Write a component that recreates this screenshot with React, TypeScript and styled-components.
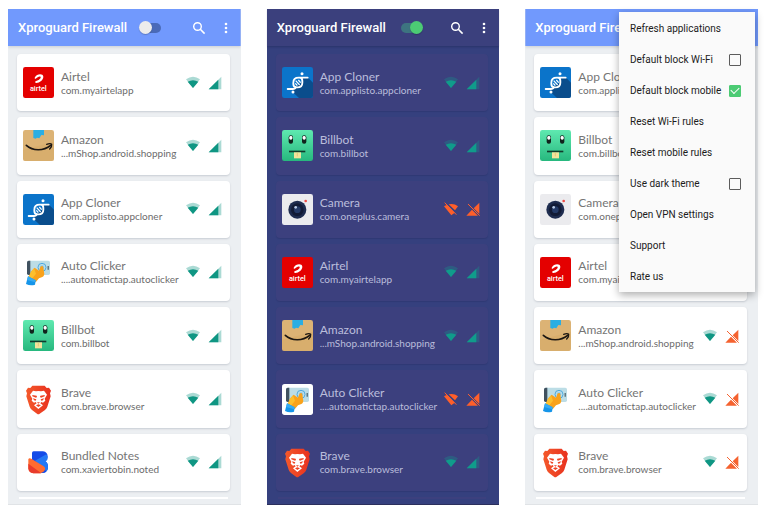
import React, { useState } from "react";
import styled, { createGlobalStyle, css } from "styled-components";

const GlobalStyle = createGlobalStyle`
  *, *::before, *::after { box-sizing: border-box; }
  body { margin: 0; background: #ffffff; font-family: Roboto, "Liberation Sans", sans-serif; }
  button { font: inherit; color: inherit; background: none; border: 0; padding: 0; cursor: pointer; }
  h1, h2, p, ul { margin: 0; padding: 0; font-weight: inherit; }
  ul { list-style: none; }
`;

interface Palette {
  page: string;
  header: string;
  card: string;
  name: string;
  pack: string;
  cardShadow: string;
  headerShadow: string;
  edge: string;
  allowed: string;
  blocked: string;
  faded: number;
}

const light: Palette = {
  page: "#eceff2",
  header: "#7199fd",
  card: "#ffffff",
  name: "#757575",
  pack: "#6c6c6c",
  cardShadow: "0 1px 2px rgba(60, 70, 90, 0.2)",
  headerShadow: "0 1px 3px rgba(60, 70, 90, 0.2)",
  edge: "#e0e3e6",
  allowed: "#0f9683",
  blocked: "#f5622f",
  faded: 0.35,
};

const dark: Palette = {
  page: "#35407e",
  header: "#3b407d",
  card: "#3c407e",
  name: "#babddb",
  pack: "#babddb",
  cardShadow: "0 1px 1px rgba(20, 25, 80, 0.18)",
  headerShadow: "0 1px 2px rgba(20, 25, 70, 0.35)",
  edge: "#2b2f5c",
  allowed: "#109c8b",
  blocked: "#ff5f2a",
  faded: 0.3,
};

const Gallery = styled.main`
  display: grid;
  grid-template-columns: repeat(3, 1fr);
  gap: 26px;
  min-height: 100vh;
  padding: 9px 17px 14px 8px;
`;

const Phone = styled.section<{ $p: Palette }>`
  position: relative;
  display: flex;
  flex-direction: column;
  min-width: 0;
  background: ${({ $p }) => $p.page};
  box-shadow: inset 0 -1px 0 ${({ $p }) => $p.edge};
`;

const Header = styled.header<{ $p: Palette }>`
  display: flex;
  align-items: center;
  height: 37px;
  padding: 0 10px;
  color: #ffffff;
  background: ${({ $p }) => $p.header};
  box-shadow: ${({ $p }) => $p.headerShadow};
  clip-path: inset(0 0 -4px 0);
`;

const Title = styled.h1`
  flex: 1;
  font-size: 13px;
  line-height: 16px;
  font-weight: 500;
  white-space: nowrap;
`;

const Switch = styled.input`
  appearance: none;
  display: grid;
  align-items: center;
  flex: none;
  width: 26px;
  height: 14px;
  margin: 0 26px 0 0;
  cursor: pointer;

  &::before,
  &::after {
    content: "";
    grid-area: 1 / 1;
  }
  &::before {
    width: 18px;
    height: 10px;
    margin-left: 4px;
    border-radius: 5px;
    background: #4a6ab8;
  }
  &::after {
    width: 13px;
    height: 13px;
    border-radius: 50%;
    background: #ececec;
    box-shadow: 0 1px 1px rgba(0, 0, 0, 0.2);
  }
  &:checked::before {
    background: #3d7480;
  }
  &:checked::after {
    justify-self: end;
    background: #4ccb74;
  }
`;

const HeaderButton = styled.button`
  display: grid;
  place-items: center;
  flex: none;
  width: 16px;
  height: 20px;

  & + & {
    width: 10px;
    margin-left: 14px;
  }
  & svg {
    display: block;
  }
`;

const CardList = styled.ul`
  display: flex;
  flex: 1;
  flex-direction: column;
  gap: 6px;
  padding: 8px 11px 6px 9px;
`;

const Card = styled.li<{ $p: Palette }>`
  display: flex;
  flex: 1;
  align-items: center;
  padding: 0 8px 0 6px;
  border-radius: 4px;
  background: ${({ $p }) => $p.card};
  box-shadow: ${({ $p }) => $p.cardShadow};
`;

const NextCard = styled.li<{ $p: Palette }>`
  height: 2px;
  margin: 0 2px;
  background: ${({ $p }) => $p.card};
`;

const AppIcon = styled.svg`
  display: block;
  flex: none;
  width: 31px;
  height: 31px;
`;

const Labels = styled.div`
  flex: 1;
  min-width: 0;
  margin-left: 7px;
  font-family: Lato, "Liberation Sans", sans-serif;
  white-space: nowrap;
`;

const AppName = styled.h2<{ $p: Palette }>`
  font-size: 12px;
  line-height: 14px;
  color: ${({ $p }) => $p.name};
`;

const PackageName = styled.p<{ $p: Palette }>`
  font-size: 10px;
  line-height: 12px;
  color: ${({ $p }) => $p.pack};
`;

const RuleButton = styled.button`
  display: block;
  flex: none;
  margin-left: 8px;

  & svg {
    display: block;
    width: 14px;
    height: 14px;
  }
`;

const Menu = styled.ul`
  position: absolute;
  top: 3px;
  right: 3px;
  width: 136px;
  padding-top: 1px;
  background: #fafafa;
  box-shadow: 0 3px 8px rgba(0, 0, 0, 0.32);
`;

const itemBox = css`
  display: flex;
  align-items: center;
  justify-content: space-between;
  width: 100%;
  height: 31px;
  padding: 0 14px 0 11px;
  font-size: 10px;
  line-height: 14px;
  color: #1c1c1c;
  white-space: nowrap;
`;

const MenuAction = styled.button`
  && {
    ${itemBox}
  }
`;

const MenuOption = styled.label`
  ${itemBox}
`;

const Tick = styled.input`
  appearance: none;
  display: grid;
  place-items: center;
  width: 12px;
  height: 12px;
  margin: 0;
  border: 1px solid #5c5c5c;
  border-radius: 1px;

  &:checked {
    border-color: #4ccb74;
    background: #4ccb74;
  }
  &:checked::before {
    content: "";
    width: 8px;
    height: 5px;
    margin-bottom: 2px;
    border: solid #ffffff;
    border-width: 0 0 1px 1px;
    transform: rotate(-45deg);
  }
`;

type AppKey = "airtel" | "amazon" | "cloner" | "clicker" | "billbot" | "brave" | "notes" | "camera";

const apps: Record<AppKey, { name: string; pack: string }> = {
  airtel: { name: "Airtel", pack: "com.myairtelapp" },
  amazon: { name: "Amazon", pack: "...mShop.android.shopping" },
  cloner: { name: "App Cloner", pack: "com.applisto.appcloner" },
  clicker: { name: "Auto Clicker", pack: "....automatictap.autoclicker" },
  billbot: { name: "Billbot", pack: "com.billbot" },
  brave: { name: "Brave", pack: "com.brave.browser" },
  notes: { name: "Bundled Notes", pack: "com.xaviertobin.noted" },
  camera: { name: "Camera", pack: "com.oneplus.camera" },
};

const artwork: Record<AppKey, React.ReactNode> = {
  airtel: (
    <>
      <rect width="93" height="93" rx="7" fill="#e40000" />
      <path
        d="M36 31C40 21 60 18 61 29C61 39 50 47 40 48C36 48 35 44 39 42C47 40 54 35 53 30C50 26 43 31 38 35C35 36 34 34 36 31Z"
        fill="#fff"
      />
      <text x="46" y="71" textAnchor="middle" fontFamily="Roboto, sans-serif" fontWeight="500" fontSize="22" fill="#fff">
        airtel
      </text>
    </>
  ),
  amazon: (
    <>
      <rect width="93" height="93" rx="7" fill="#dcb375" />
      <path d="M0 60L93 35V86Q93 93 86 93H7Q0 93 0 86Z" fill="#d6aa68" opacity=".6" />
      <path d="M31 0H63V16L55 15L49 25L42 23L38 26L31 24Z" fill="#2baee3" />
      <path d="M10 46C30 64 62 63 83 46" fill="none" stroke="#1b1612" strokeWidth="5" strokeLinecap="round" />
      <path d="M71 43C77 41 83 40 86 43C87 48 84 53 80 57" fill="none" stroke="#1b1612" strokeWidth="4" strokeLinecap="round" />
    </>
  ),
  cloner: (
    <>
      <rect width="93" height="93" rx="7" fill="#0b74ca" />
      <path d="M61 30L76 30L93 47V86Q93 93 86 93H51L32 75L37 60L60 46Z" fill="#0a4d8c" />
      <path
        d="M77 32H50Q34 32 34 47V51Q34 61 43 61H46Q61 61 61 47V41Q61 32 52 32M17 66H32Q40 66 42 60"
        fill="#0a4d8c"
        fillOpacity="0"
        stroke="#fff"
        strokeWidth="5.5"
        strokeLinecap="round"
      />
      <path d="M41 41L53 54M40 49L46 56M49 39L56 47" stroke="#fff" strokeWidth="3.5" />
      <circle cx="60" cy="20" r="4.5" fill="#fff" />
      <circle cx="33" cy="75" r="4.5" fill="#fff" />
    </>
  ),
  clicker: (
    <>
      <rect width="93" height="93" rx="8" fill="#fff" />
      <rect x="12" y="11" width="69" height="43" rx="5" fill="#bcdde6" />
      <path d="M17 11H22V54H17Q12 54 12 49V16Q12 11 17 11Z" fill="#40515f" />
      <path d="M74 27H77V38H74Z" fill="#34444f" />
      <circle cx="57" cy="31" r="12" fill="none" stroke="#369fe0" strokeWidth="2.5" />
      <circle cx="57" cy="31" r="6" fill="#81c6ee" />
      <path d="M57 27Q52 27 51 33L48 41L35 32L25 43L17 60L38 76L48 64L58 60Q66 56 63 46L61 31Q60 27 57 27Z" fill="#f9a21b" />
      <path d="M33 34L24 44L17 60L26 67L39 50Z" fill="#fdbf2d" />
      <path d="M15 58L38 70L36 83Q22 88 9 81Z" fill="#1595e9" />
      <path d="M15 58L38 70L37 76L12 69Z" fill="#36abf3" />
    </>
  ),
  billbot: (
    <>
      <rect width="93" height="93" rx="7" fill="url(#billbotFace)" />
      <rect x="20" y="16" width="13" height="25" rx="6" fill="#11231d" />
      <rect x="60" y="16" width="13" height="25" rx="6" fill="#11231d" />
      <rect x="22" y="18" width="9" height="11" rx="4" fill="#fff" />
      <rect x="62" y="18" width="9" height="11" rx="4" fill="#fff" />
      <rect x="21" y="62" width="49" height="5" fill="#123b2c" />
      <rect x="36" y="67" width="21" height="18" fill="#f4e39b" />
      <path d="M46 67V79" stroke="#d9c06e" strokeWidth="2" />
    </>
  ),
  brave: (
    <>
      <path
        d="M28 5H65L71 12L78 11L84 20L81 28L83 37L73 68Q71 74 66 78L50 89Q46 92 42 89L27 78Q22 74 20 68L10 37L12 28L9 20L15 11L22 12Z"
        fill="url(#braveFur)"
      />
      <path
        d="M30 20L39 22Q46 20 54 22L63 20L72 32L65 44L67 50L60 56L55 54L52 58L60 64L46 75L33 64L41 58L38 54L33 56L26 50L28 44L21 32Z"
        fill="#fff"
      />
      <path
        d="M28 33L41 35L42 39L39 41L28 37ZM65 33L52 35L51 39L54 41L65 37ZM30 43L40 46L38 50L33 49ZM63 43L53 46L55 50L60 49ZM42 55H51L46 59ZM39 64L46 61L54 64L46 69Z"
        fill="#ee4323"
      />
    </>
  ),
  notes: (
    <>
      <path d="M27 18Q27 13 32 13H60Q74 15 74 29Q74 38 67 43Q76 48 75 62Q73 77 60 78H40L27 60Z" fill="#134be8" />
      <path d="M36 41L70 22Q76 30 73 38Q71 42 67 43Q76 49 75 62Q74 69 70 73Z" fill="#2379f5" />
      <path d="M16 37Q18 31 25 35L62 58Q69 63 65 70Q61 78 52 79H31Q17 77 16 64Z" fill="#ff6b30" />
      <path d="M16 50L55 79H31Q17 77 16 64Z" fill="#e83b2c" />
    </>
  ),
  camera: (
    <>
      <rect width="93" height="93" rx="7" fill="#ebebee" />
      <circle cx="46" cy="47" r="27" fill="#1e2c4f" />
      <circle cx="46" cy="47" r="19" fill="#121b36" />
      <circle cx="46" cy="47" r="10" fill="#243a67" />
      <circle cx="41" cy="40" r="4" fill="#b9cbe6" />
      <circle cx="71" cy="21" r="4" fill="#ee4b45" />
    </>
  ),
};

const Gradients = () => (
  <svg width="0" height="0" aria-hidden="true" display="block">
    <defs>
      <linearGradient id="billbotFace" x1="0" y1="0" x2="0" y2="1">
        <stop offset="0" stopColor="#5fe9b0" />
        <stop offset="1" stopColor="#27b87e" />
      </linearGradient>
      <linearGradient id="braveFur" x1="0" y1="0" x2="1" y2="0">
        <stop offset="0" stopColor="#f4592b" />
        <stop offset="1" stopColor="#e8311f" />
      </linearGradient>
    </defs>
  </svg>
);

const WifiIcon = ({ p, blocked }: { p: Palette; blocked: boolean }) =>
  blocked ? (
    <svg viewBox="0 0 42 42" aria-hidden="true">
      <path d="M14 7Q30 3 42 13L33 25ZM9 9L32 32L22 40L0 13Q4 10 9 9Z" fill={p.blocked} />
      <path d="M2 2L37 38" stroke={p.blocked} strokeWidth="3" />
    </svg>
  ) : (
    <svg viewBox="0 0 42 42" aria-hidden="true">
      <path d="M0 10Q21 -5 42 10L21 36Z" fill={p.allowed} opacity={p.faded} />
      <path d="M5 17Q21 8 37 17L21 36Z" fill={p.allowed} />
    </svg>
  );

const MobileIcon = ({ p, blocked }: { p: Palette; blocked: boolean }) =>
  blocked ? (
    <svg viewBox="0 0 42 42" aria-hidden="true">
      <path d="M40 2V36L23 19ZM18 23L36 41H1Z" fill={p.blocked} />
      <path d="M6 6L41 41" stroke={p.blocked} strokeWidth="3" />
    </svg>
  ) : (
    <svg viewBox="0 0 42 42" aria-hidden="true">
      <path d="M40 2V40H2Z" fill={p.allowed} opacity={p.faded} />
      <path d="M31 11V40H2Z" fill={p.allowed} />
    </svg>
  );

interface Row {
  app: AppKey;
  wifiBlocked?: boolean;
  mobileBlocked?: boolean;
}

function AppRow({ row, p }: { row: Row; p: Palette }) {
  const [wifi, setWifi] = useState(!!row.wifiBlocked);
  const [mobile, setMobile] = useState(!!row.mobileBlocked);
  const { name, pack } = apps[row.app];
  return (
    <Card $p={p}>
      <AppIcon viewBox="0 0 93 93" aria-hidden="true">
        {artwork[row.app]}
      </AppIcon>
      <Labels>
        <AppName $p={p}>{name}</AppName>
        <PackageName $p={p}>{pack}</PackageName>
      </Labels>
      <RuleButton aria-label={`Wi-Fi rule for ${name}`} aria-pressed={wifi} onClick={() => setWifi(!wifi)}>
        <WifiIcon p={p} blocked={wifi} />
      </RuleButton>
      <RuleButton aria-label={`Mobile rule for ${name}`} aria-pressed={mobile} onClick={() => setMobile(!mobile)}>
        <MobileIcon p={p} blocked={mobile} />
      </RuleButton>
    </Card>
  );
}

interface PhoneProps {
  p: Palette;
  rows: Row[];
  enabled?: boolean;
  children?: React.ReactNode;
}

function FirewallPhone({ p, rows, enabled = false, children }: PhoneProps) {
  return (
    <Phone $p={p}>
      <Header $p={p}>
        <Title>Xproguard Firewall</Title>
        <Switch type="checkbox" role="switch" aria-label="Enable firewall" defaultChecked={enabled} />
        <HeaderButton aria-label="Search">
          <svg width="14" height="14" viewBox="0 0 14 14" fill="none" stroke="currentColor" strokeWidth="1.4">
            <circle cx="5.5" cy="5.5" r="3.8" />
            <path d="M8.3 8.3L12.6 12.6" strokeWidth="1.6" />
          </svg>
        </HeaderButton>
        <HeaderButton aria-label="More options">
          <svg width="4" height="12" viewBox="0 0 4 12" fill="currentColor">
            <circle cx="2" cy="2" r="1.3" />
            <circle cx="2" cy="6" r="1.3" />
            <circle cx="2" cy="10" r="1.3" />
          </svg>
        </HeaderButton>
      </Header>
      <CardList>
        {rows.map((row) => (
          <AppRow key={row.app} row={row} p={p} />
        ))}
        <NextCard $p={p} aria-hidden="true" />
      </CardList>
      {children}
    </Phone>
  );
}

const menuItems: { label: string; option?: boolean; checked?: boolean }[] = [
  { label: "Refresh applications" },
  { label: "Default block Wi-Fi", option: true },
  { label: "Default block mobile", option: true, checked: true },
  { label: "Reset Wi-Fi rules" },
  { label: "Reset mobile rules" },
  { label: "Use dark theme", option: true },
  { label: "Open VPN settings" },
  { label: "Support" },
  { label: "Rate us" },
];

const lightRows: Row[] = [
  { app: "airtel" },
  { app: "amazon" },
  { app: "cloner" },
  { app: "clicker" },
  { app: "billbot" },
  { app: "brave" },
  { app: "notes" },
];

const darkRows: Row[] = [
  { app: "cloner" },
  { app: "billbot" },
  { app: "camera", wifiBlocked: true, mobileBlocked: true },
  { app: "airtel" },
  { app: "amazon" },
  { app: "clicker", wifiBlocked: true, mobileBlocked: true },
  { app: "brave" },
];

const menuRows: Row[] = [
  { app: "cloner", mobileBlocked: true },
  { app: "billbot", mobileBlocked: true },
  { app: "camera", mobileBlocked: true },
  { app: "airtel", mobileBlocked: true },
  { app: "amazon", mobileBlocked: true },
  { app: "clicker", mobileBlocked: true },
  { app: "brave", mobileBlocked: true },
];

export default function App() {
  return (
    <>
      <GlobalStyle />
      <Gradients />
      <Gallery>
        <FirewallPhone p={light} rows={lightRows} />
        <FirewallPhone p={dark} rows={darkRows} enabled />
        <FirewallPhone p={light} rows={menuRows}>
          <Menu>
            {menuItems.map(({ label, option, checked }) => (
              <li key={label}>
                {option ? (
                  <MenuOption>
                    {label}
                    <Tick type="checkbox" defaultChecked={checked} />
                  </MenuOption>
                ) : (
                  <MenuAction>{label}</MenuAction>
                )}
              </li>
            ))}
          </Menu>
        </FirewallPhone>
      </Gallery>
    </>
  );
}
